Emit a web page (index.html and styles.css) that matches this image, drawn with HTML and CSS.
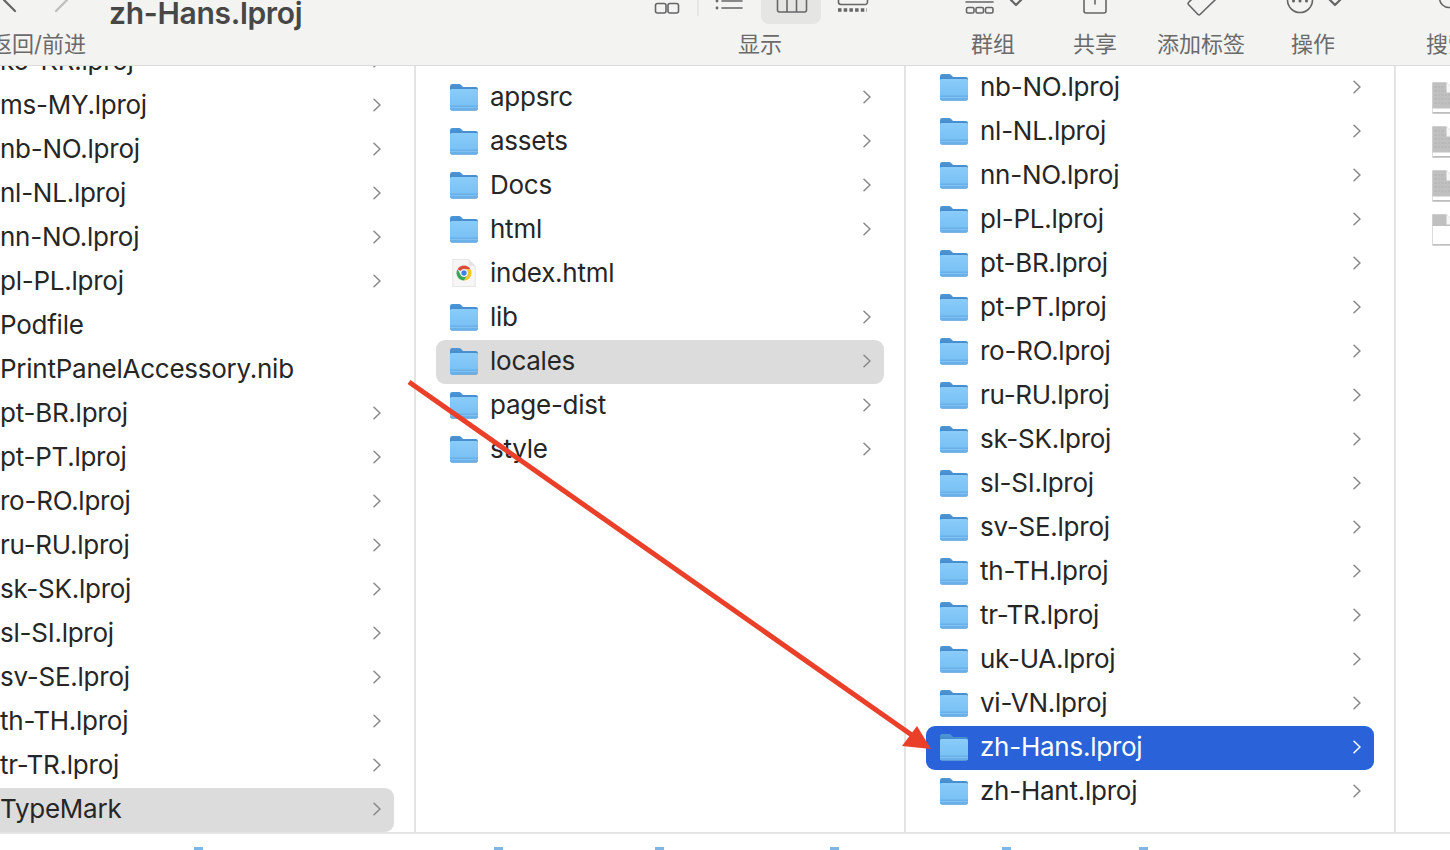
FILE: index.html
```html
<!DOCTYPE html>
<html lang="zh-Hans">
<head>
<meta charset="utf-8">
<title>zh-Hans.lproj</title>
<link rel="stylesheet" href="styles.css">
</head>
<body>
<svg class="defs" aria-hidden="true">
  <defs>
    <linearGradient id="fbody" x1="0" y1="0" x2="0" y2="1"><stop offset="0" stop-color="#8accf9"/><stop offset="1" stop-color="#74bdf3"/></linearGradient>
    <linearGradient id="ftab" x1="0" y1="0" x2="0" y2="1"><stop offset="0" stop-color="#4f96d6"/><stop offset="1" stop-color="#3b82c6"/></linearGradient>
    <symbol id="folder" viewBox="0 0 28 28">
      <path d="M0 3.2A2.2 2.2 0 0 1 2.2 1H9c1 0 1.500.4 2.200 1.100L13 4h12.800A2.200 2.200 0 0 1 28 6.200V12H0z" fill="url(#ftab)"/>
      <path d="M0 7.500A1.500 1.500 0 0 1 1.500 6h25A1.500 1.500 0 0 1 28 7.500V25.500A2 2 0 0 1 26 27.500H2A2 2 0 0 1 0 25.500z" fill="url(#fbody)"/>
      <path d="M0 22.500h28V25.500A2 2 0 0 1 26 27.500H2A2 2 0 0 1 0 25.500z" fill="#69b0e8"/>
      <path d="M0 24.500h28" stroke="#8ccaf6" stroke-width=".7"/>
      <path d="M1 28h26" stroke="#4d86b5" stroke-width=".9" opacity=".6"/>
    </symbol>
    <symbol id="chev" viewBox="0 0 8 14"><path d="M1 1.200 7 7 1 12.800" fill="none" stroke="currentColor" stroke-width="1.500" stroke-linecap="round" stroke-linejoin="round"/></symbol>
    <symbol id="doc" viewBox="0 0 30 32">
      <path d="M.5 .5h14l10 10v20H.5z" fill="#fff" stroke="#d6d6d6" stroke-width=".8"/>
      <path d="M.5 .5h14l10 10v16H.5z" fill="#c0c0c0"/>
      <path d="M2 5h11M2 9h21M2 13h21M2 17h21M2 21h21" stroke="#b2b2b2" stroke-width="1.100" stroke-dasharray="3 1 2 1"/>
      <path d="M14.500 .5v10h10z" fill="#f6f6f6"/>
      <path d="M.5 31h24" stroke="#9a9a9a" stroke-width="1"/>
    </symbol>
    <symbol id="doc-blank" viewBox="0 0 30 32">
      <path d="M.5 .5h14l10 10v20H.5z" fill="#fff" stroke="#d2d2d2" stroke-width=".8"/>
      <path d="M.5 .5h14l10 10v1.500H.5z" fill="#c0c0c0"/>
      <path d="M14.500 .5v10h10z" fill="#f6f6f6"/>
      <path d="M.5 31h24" stroke="#a5a5a5" stroke-width="1"/>
    </symbol>
  </defs>
</svg>

<header class="toolbar">
  <div class="tool-icons">
    <svg class="ti ti-nav" viewBox="0 0 72 26"><path d="M15 -11 4 0 15 11" class="st"/><path d="M56 11 67 0" class="st lt"/></svg>
    <div class="title">zh-Hans.lproj</div>
    <svg class="ti ti-view" viewBox="0 0 222 26">
      <rect x="111" y="-10" width="60" height="34" rx="8" fill="#e5e5e4"/>
      <rect x="5.500" y="3.500" width="10.500" height="9.500" rx="2" class="st thin"/><rect x="18" y="3.500" width="10.500" height="9.500" rx="2" class="st thin"/>
      <path d="M48 -1v17" stroke="#e2e2e1" stroke-width="1.500"/>
      <circle cx="67" cy="1" r="1.400" fill="#666"/><circle cx="67" cy="8" r="1.400" fill="#666"/><path d="M72 1h20M72 8h20" class="st thin"/>
      <path d="M127.500 -4v14a2 2 0 0 0 2 2h25a2 2 0 0 0 2-2V-4M137 -4V12M146.500 -4V12" class="st thin"/>
      <path d="M188.500 -4v6a2.500 2.500 0 0 0 2.500 2.500h24a2.500 2.500 0 0 0 2.500-2.500v-6" class="st thin"/>
      <path d="M188 10h29" stroke="#666" stroke-width="3.500" stroke-dasharray="3.500 2.200"/>
    </svg>
    <svg class="ti ti-group" viewBox="0 0 62 26">
      <path d="M2 2h27" class="st thin"/>
      <rect x="2.500" y="7.500" width="7.500" height="5.500" rx="1.500" class="st thin"/><rect x="12" y="7.500" width="7.500" height="5.500" rx="1.500" class="st thin"/><rect x="21.500" y="7.500" width="7.500" height="5.500" rx="1.500" class="st thin"/>
      <path d="M46 -1 52 5 58 -1" class="st"/>
    </svg>
    <svg class="ti ti-share" viewBox="0 0 26 26"><path d="M7 -2H4a2 2 0 0 0-2 2v11a2 2 0 0 0 2 2h18a2 2 0 0 0 2-2V0a2 2 0 0 0-2-2h-3M13 -2v6" class="st thin"/></svg>
    <svg class="ti ti-tag" viewBox="0 0 34 26"><path d="M9 -3 3.500 2.500a1.500 1.500 0 0 0 0 2L13 14.500a1.500 1.500 0 0 0 2 0L31 -1" class="st thin"/></svg>
    <svg class="ti ti-action" viewBox="0 0 58 26"><circle cx="15" cy="0" r="12.500" class="st thin"/><circle cx="8.500" cy="1" r="1.500" fill="#666"/><circle cx="15" cy="1" r="1.500" fill="#666"/><circle cx="21.500" cy="1" r="1.500" fill="#666"/><path d="M44 -1 50 5 56 -1" class="st"/></svg>
    <svg class="ti ti-search" viewBox="0 0 14 26"><circle cx="13" cy="-2" r="9.500" class="st thin"/></svg>
  </div>
  <div class="tool-labels">
    <span class="lb lb-back">返回/前进</span>
    <span class="lb lb-view">显示</span>
    <span class="lb lb-group">群组</span>
    <span class="lb lb-share">共享</span>
    <span class="lb lb-tag">添加标签</span>
    <span class="lb lb-action">操作</span>
    <span class="lb lb-search">搜索</span>
  </div>
</header>

<main class="browser">
  <section class="col col-first">
    <div class="list list-scrolled">
      <div class="row"><svg class="ico"><use href="#folder"/></svg><span class="name">ko-KR.lproj</span><svg class="chev"><use href="#chev"/></svg></div>
      <div class="row"><svg class="ico"><use href="#folder"/></svg><span class="name">ms-MY.lproj</span><svg class="chev"><use href="#chev"/></svg></div>
      <div class="row"><svg class="ico"><use href="#folder"/></svg><span class="name">nb-NO.lproj</span><svg class="chev"><use href="#chev"/></svg></div>
      <div class="row"><svg class="ico"><use href="#folder"/></svg><span class="name">nl-NL.lproj</span><svg class="chev"><use href="#chev"/></svg></div>
      <div class="row"><svg class="ico"><use href="#folder"/></svg><span class="name">nn-NO.lproj</span><svg class="chev"><use href="#chev"/></svg></div>
      <div class="row"><svg class="ico"><use href="#folder"/></svg><span class="name">pl-PL.lproj</span><svg class="chev"><use href="#chev"/></svg></div>
      <div class="row"><svg class="ico"><use href="#doc"/></svg><span class="name">Podfile</span></div>
      <div class="row"><svg class="ico"><use href="#doc"/></svg><span class="name">PrintPanelAccessory.nib</span></div>
      <div class="row"><svg class="ico"><use href="#folder"/></svg><span class="name">pt-BR.lproj</span><svg class="chev"><use href="#chev"/></svg></div>
      <div class="row"><svg class="ico"><use href="#folder"/></svg><span class="name">pt-PT.lproj</span><svg class="chev"><use href="#chev"/></svg></div>
      <div class="row"><svg class="ico"><use href="#folder"/></svg><span class="name">ro-RO.lproj</span><svg class="chev"><use href="#chev"/></svg></div>
      <div class="row"><svg class="ico"><use href="#folder"/></svg><span class="name">ru-RU.lproj</span><svg class="chev"><use href="#chev"/></svg></div>
      <div class="row"><svg class="ico"><use href="#folder"/></svg><span class="name">sk-SK.lproj</span><svg class="chev"><use href="#chev"/></svg></div>
      <div class="row"><svg class="ico"><use href="#folder"/></svg><span class="name">sl-SI.lproj</span><svg class="chev"><use href="#chev"/></svg></div>
      <div class="row"><svg class="ico"><use href="#folder"/></svg><span class="name">sv-SE.lproj</span><svg class="chev"><use href="#chev"/></svg></div>
      <div class="row"><svg class="ico"><use href="#folder"/></svg><span class="name">th-TH.lproj</span><svg class="chev"><use href="#chev"/></svg></div>
      <div class="row"><svg class="ico"><use href="#folder"/></svg><span class="name">tr-TR.lproj</span><svg class="chev"><use href="#chev"/></svg></div>
      <div class="row row-parent"><svg class="ico"><use href="#folder"/></svg><span class="name">TypeMark</span><svg class="chev"><use href="#chev"/></svg></div>
    </div>
  </section>

  <section class="col">
    <div class="list list-inset">
      <div class="row"><svg class="ico"><use href="#folder"/></svg><span class="name">appsrc</span><svg class="chev"><use href="#chev"/></svg></div>
      <div class="row"><svg class="ico"><use href="#folder"/></svg><span class="name">assets</span><svg class="chev"><use href="#chev"/></svg></div>
      <div class="row"><svg class="ico"><use href="#folder"/></svg><span class="name">Docs</span><svg class="chev"><use href="#chev"/></svg></div>
      <div class="row"><svg class="ico"><use href="#folder"/></svg><span class="name">html</span><svg class="chev"><use href="#chev"/></svg></div>
      <div class="row">
        <svg class="ico" viewBox="0 0 28 30">
          <path d="M2 .5h17l7 7v22H2z" fill="#f6f6f6" stroke="#dedede" stroke-width=".8"/>
          <path d="M19 .5v7h7z" fill="#e4e4e4"/>
          <path d="M14 7a8 8 0 0 1 6.930 4H14a4 4 0 0 0-3.460 2L7.070 11A8 8 0 0 1 14 7z" fill="#dd4b3e"/>
          <path d="M20.930 11A8 8 0 0 1 14 23l3.460-6A4 4 0 0 0 14 11z" fill="#f5c330"/>
          <path d="M14 23a8 8 0 0 1-6.930-12l3.470 6A4 4 0 0 0 17.460 17z" fill="#3ba655"/>
          <circle cx="14" cy="15" r="3.400" fill="#3f7fe8" stroke="#fff" stroke-width="1.100"/>
        </svg>
        <span class="name">index.html</span>
      </div>
      <div class="row"><svg class="ico"><use href="#folder"/></svg><span class="name">lib</span><svg class="chev"><use href="#chev"/></svg></div>
      <div class="row row-parent"><svg class="ico"><use href="#folder"/></svg><span class="name">locales</span><svg class="chev"><use href="#chev"/></svg></div>
      <div class="row"><svg class="ico"><use href="#folder"/></svg><span class="name">page-dist</span><svg class="chev"><use href="#chev"/></svg></div>
      <div class="row"><svg class="ico"><use href="#folder"/></svg><span class="name">style</span><svg class="chev"><use href="#chev"/></svg></div>
    </div>
  </section>

  <section class="col">
    <div class="list">
      <div class="row"><svg class="ico"><use href="#folder"/></svg><span class="name">nb-NO.lproj</span><svg class="chev"><use href="#chev"/></svg></div>
      <div class="row"><svg class="ico"><use href="#folder"/></svg><span class="name">nl-NL.lproj</span><svg class="chev"><use href="#chev"/></svg></div>
      <div class="row"><svg class="ico"><use href="#folder"/></svg><span class="name">nn-NO.lproj</span><svg class="chev"><use href="#chev"/></svg></div>
      <div class="row"><svg class="ico"><use href="#folder"/></svg><span class="name">pl-PL.lproj</span><svg class="chev"><use href="#chev"/></svg></div>
      <div class="row"><svg class="ico"><use href="#folder"/></svg><span class="name">pt-BR.lproj</span><svg class="chev"><use href="#chev"/></svg></div>
      <div class="row"><svg class="ico"><use href="#folder"/></svg><span class="name">pt-PT.lproj</span><svg class="chev"><use href="#chev"/></svg></div>
      <div class="row"><svg class="ico"><use href="#folder"/></svg><span class="name">ro-RO.lproj</span><svg class="chev"><use href="#chev"/></svg></div>
      <div class="row"><svg class="ico"><use href="#folder"/></svg><span class="name">ru-RU.lproj</span><svg class="chev"><use href="#chev"/></svg></div>
      <div class="row"><svg class="ico"><use href="#folder"/></svg><span class="name">sk-SK.lproj</span><svg class="chev"><use href="#chev"/></svg></div>
      <div class="row"><svg class="ico"><use href="#folder"/></svg><span class="name">sl-SI.lproj</span><svg class="chev"><use href="#chev"/></svg></div>
      <div class="row"><svg class="ico"><use href="#folder"/></svg><span class="name">sv-SE.lproj</span><svg class="chev"><use href="#chev"/></svg></div>
      <div class="row"><svg class="ico"><use href="#folder"/></svg><span class="name">th-TH.lproj</span><svg class="chev"><use href="#chev"/></svg></div>
      <div class="row"><svg class="ico"><use href="#folder"/></svg><span class="name">tr-TR.lproj</span><svg class="chev"><use href="#chev"/></svg></div>
      <div class="row"><svg class="ico"><use href="#folder"/></svg><span class="name">uk-UA.lproj</span><svg class="chev"><use href="#chev"/></svg></div>
      <div class="row"><svg class="ico"><use href="#folder"/></svg><span class="name">vi-VN.lproj</span><svg class="chev"><use href="#chev"/></svg></div>
      <div class="row row-selected"><svg class="ico"><use href="#folder"/></svg><span class="name">zh-Hans.lproj</span><svg class="chev"><use href="#chev"/></svg></div>
      <div class="row"><svg class="ico"><use href="#folder"/></svg><span class="name">zh-Hant.lproj</span><svg class="chev"><use href="#chev"/></svg></div>
    </div>
  </section>

  <section class="col-preview">
    <svg class="doc"><use href="#doc"/></svg>
    <svg class="doc"><use href="#doc"/></svg>
    <svg class="doc"><use href="#doc"/></svg>
    <svg class="doc"><use href="#doc-blank"/></svg>
  </section>
</main>

<footer class="pathbar">
  <i class="crumb crumb-a"></i><i class="crumb crumb-b"></i><i class="crumb crumb-c"></i><i class="crumb crumb-d"></i><i class="crumb crumb-e"></i><i class="crumb crumb-f"></i>
</footer>

<svg class="arrow" viewBox="0 0 1450 850" aria-hidden="true">
  <path d="M409 382 916 738" stroke="#ea3f28" stroke-width="5" fill="none"/>
  <path d="M917 726 902 746 931 749z" fill="#ea3f28"/>
</svg>
</body>
</html>
```
FILE: styles.css
```css
* { box-sizing: border-box; }
html, body { margin: 0; height: 100%; }
body {
  width: 1450px;
  height: 850px;
  overflow: hidden;
  position: relative;
  display: flex;
  flex-direction: column;
  background: #fff;
  font-family: Inter, "Noto Sans CJK SC", sans-serif;
  color: #262626;
}
.defs { width: 0; height: 0; position: absolute; }

/* toolbar */
.toolbar {
  flex: 0 0 66px;
  background: #f3f3f2;
  border-bottom: 1px solid #dcdcdc;
  overflow: hidden;
}
.tool-icons { display: flex; height: 26px; }
.ti { height: 26px; flex: none; display: block; overflow: hidden; }
.st { fill: none; stroke: #666; stroke-width: 2.200; stroke-linecap: round; stroke-linejoin: round; }
.st.thin { stroke-width: 1.600; }
.st.lt { stroke: #bdbdbd; }
.ti-nav { width: 72px; }
.title {
  flex: none;
  width: 541px;
  margin-left: 37px;
  font-size: 30px;
  font-weight: 600;
  line-height: 26px;
  color: #474747;
  letter-spacing: -0.3px;
}
.ti-view { width: 222px; }
.ti-group { width: 62px; margin-left: 92px; }
.ti-share { width: 26px; margin-left: 56px; }
.ti-tag { width: 34px; margin-left: 77px; }
.ti-action { width: 58px; margin-left: 66px; }
.ti-search { width: 14px; margin-left: 93px; }

.tool-labels {
  display: flex;
  height: 35px;
  align-items: center;
  font-size: 22px;
  line-height: 30px;
  color: #6a6a6a;
  white-space: nowrap;
}
.lb { flex: none; display: block; }
.lb-back { margin-left: -10px; width: 96px; }
.lb-view { margin-left: 652px; }
.lb-group { margin-left: 189px; }
.lb-share { margin-left: 58px; }
.lb-tag { margin-left: 40px; }
.lb-action { margin-left: 46px; }
.lb-search { margin-left: 91px; }

/* columns */
.browser {
  flex: 0 0 766px;
  display: flex;
  overflow: hidden;
}
.col {
  flex: 0 0 490px;
  padding: 0 20px;
  border-left: 2px solid #e4e4e4;
  overflow: hidden;
}
.col-first { margin-left: -76px; }
.list-scrolled { margin-top: -26px; }
.list-inset { padding-top: 10px; }
.row {
  height: 44px;
  display: flex;
  align-items: center;
  padding: 0 13px 2px 14px;
  border-radius: 9px;
}
.ico { width: 28px; height: 28px; flex: none; margin-right: 12px; }
.name {
  flex: 1;
  font-size: 26px;
  line-height: 42px;
  letter-spacing: -0.25px;
  white-space: nowrap;
}
.chev { width: 8px; height: 14px; flex: none; color: #888; }
.row-parent { background: #dcdcdc; }
.row-selected { background: #2a62d9; color: #fff; }
.row-selected .chev { color: #fff; }

.col-preview {
  flex: 1;
  padding: 16px 0 0 36px;
  border-left: 2px solid #e4e4e4;
  display: flex;
  flex-direction: column;
  gap: 12px;
  overflow: hidden;
}
.doc { width: 30px; height: 32px; flex: none; }

/* path bar */
.pathbar {
  flex: 1;
  border-top: 2px solid #e4e4e4;
  position: relative;
  display: flex;
  align-items: flex-end;
}
.crumb { display: block; height: 3px; width: 9px; background: #7fb6e6; flex: none; }
.crumb-a { margin-left: 194px; }
.crumb-b { margin-left: 291px; }
.crumb-c { margin-left: 152px; }
.crumb-d { margin-left: 166px; }
.crumb-e { margin-left: 163px; }
.crumb-f { margin-left: 128px; }

/* annotation drawn over the window */
.arrow {
  position: absolute;
  left: 0;
  top: 0;
  width: 1450px;
  height: 850px;
  pointer-events: none;
}
```
